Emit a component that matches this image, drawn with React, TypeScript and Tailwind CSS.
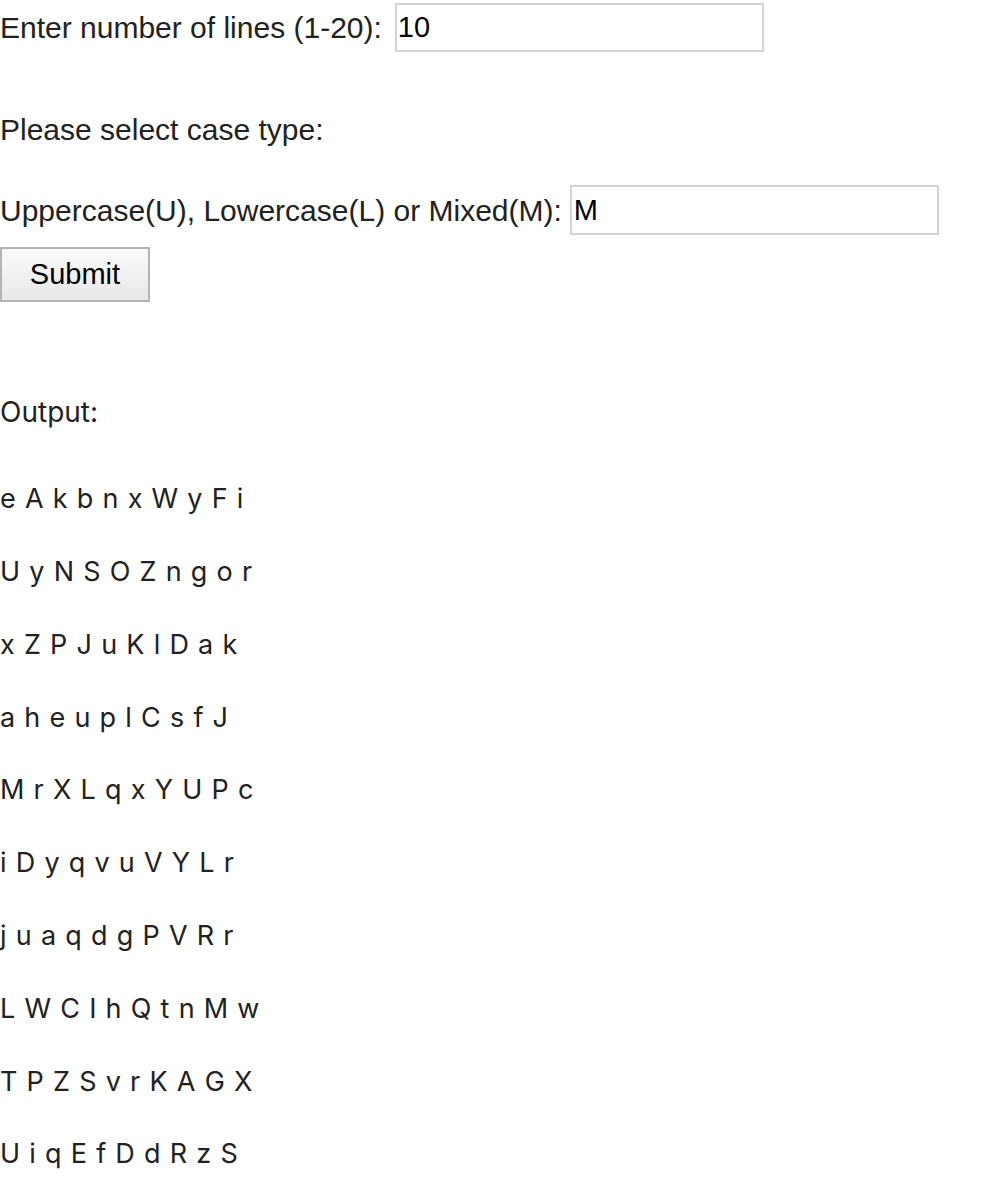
import React from 'react';

const lines = [
  'e A k b n x W y F i',
  'U y N S O Z n g o r',
  'x Z P J u K l D a k',
  'a h e u p l C s f J',
  'M r X L q x Y U P c',
  'i D y q v u V Y L r',
  'j u a q d g P V R r',
  'L W C I h Q t n M w',
  'T P Z S v r K A G X',
  'U i q E f D d R z S',
];

export default function App() {
  return (
    <div className="bg-white text-[#222] font-['Liberation_Sans',Arial,sans-serif] text-[30px] min-h-[1200px]">
      <div className="flex items-center h-[55px]">
        <span>Enter number of lines (1-20):</span>
        <input
          className="ml-[13px] w-[369px] h-[49px] border-2 border-[#d4d4d4] px-[1px] text-[29px] text-black outline-none"
          defaultValue="10"
        />
      </div>
      <p className="mt-[58px] leading-[34px]">Please select case type:</p>
      <div className="flex items-center mt-[38px] h-[50px]">
        <span>Uppercase(U), Lowercase(L) or Mixed(M):</span>
        <input
          className="ml-[8px] w-[369px] h-[50px] border-2 border-[#d4d4d4] px-[2px] text-[29px] text-black outline-none"
          defaultValue="M"
        />
      </div>
      <button className="mt-[12px] w-[150px] h-[55px] border-2 border-[#b4b4b4] bg-gradient-to-b from-[#fafafa] to-[#e8e8e8] text-[29px] text-black">
        Submit
      </button>
      <p className="mt-[93px] leading-[34px] font-['Inter',sans-serif] text-[28px]">Output:</p>
      <div className="mt-[34px] font-['Inter',sans-serif] text-[27px] text-[#222]">
        {lines.map((l, i) => (
          <div key={i} className="h-[72.8px] flex items-center tracking-[0.8px]">
            {l}
          </div>
        ))}
      </div>
    </div>
  );
}
